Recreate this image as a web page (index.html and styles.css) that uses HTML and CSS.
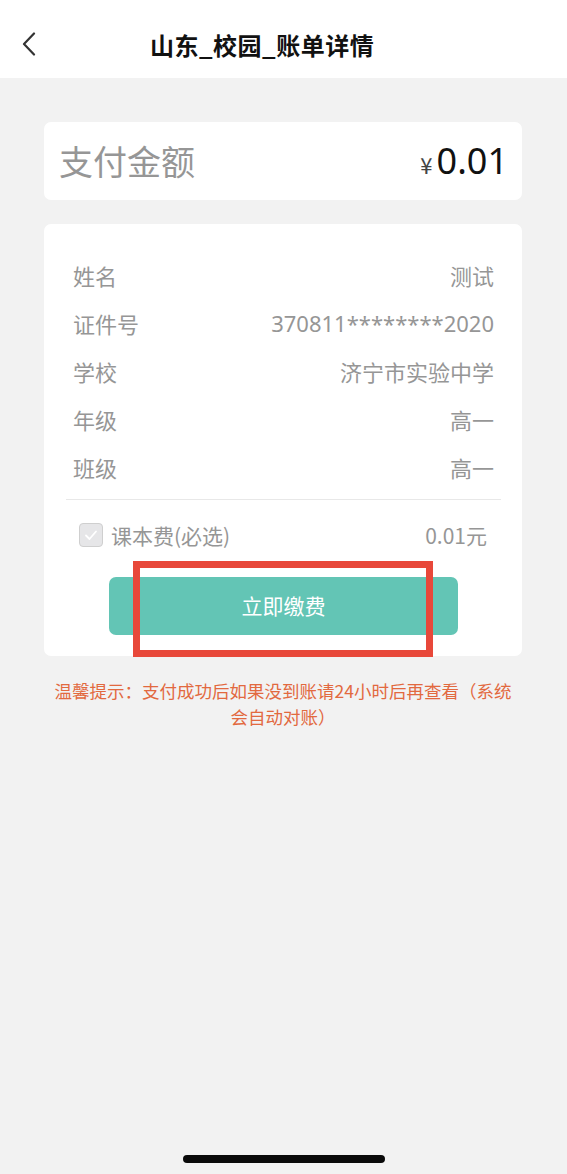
FILE: index.html
```html
<!DOCTYPE html>
<html lang="zh-CN">
<head>
<meta charset="utf-8">
<title>山东_校园_账单详情</title>
<link rel="stylesheet" href="styles.css">
</head>
<body>
<div class="page">
  <header class="nav">
    <span class="back">
      <svg width="14" height="24" viewBox="0 0 14 24"><path d="M12 1.5 L2 12 L12 22.5" fill="none" stroke="#333" stroke-width="2.2" stroke-linecap="round" stroke-linejoin="round"/></svg>
    </span>
    <h1 class="title">山东_校园_账单详情</h1>
  </header>

  <main class="content">
    <section class="card amount-card">
      <span class="amount-label">支付金额</span>
      <span class="amount-value"><span class="yen">¥</span>0.01</span>
    </section>

    <section class="card detail-card">
      <div class="rows">
        <div class="row"><span>姓名</span><span>测试</span></div>
        <div class="row"><span>证件号</span><span>370811********2020</span></div>
        <div class="row"><span>学校</span><span>济宁市实验中学</span></div>
        <div class="row"><span>年级</span><span>高一</span></div>
        <div class="row"><span>班级</span><span>高一</span></div>
      </div>
      <div class="divider"></div>
      <div class="fee-row">
        <span class="fee-left">
          <span class="checkbox">
            <svg width="14" height="12" viewBox="0 0 14 12"><path d="M2 6.5 L5.5 10 L12 2.5" fill="none" stroke="#fff" stroke-width="1.8" stroke-linecap="round" stroke-linejoin="round"/></svg>
          </span>
          <span>课本费(必选)</span>
        </span>
        <span>0.01元</span>
      </div>
      <div class="btn-wrap">
        <button class="pay-btn">立即缴费</button>
        <span class="highlight"></span>
      </div>
    </section>

    <p class="tip">温馨提示：支付成功后如果没到账请24小时后再查看（系统会自动对账）</p>
  </main>

  <div class="home-indicator"></div>
</div>
</body>
</html>
```

FILE: styles.css
```css
* { box-sizing: border-box; }
html, body { margin: 0; padding: 0; }
body {
  background: #f2f2f2;
  font-family: "Noto Sans CJK SC", "Noto Sans", sans-serif;
}
.page {
  min-height: 1174px;
  display: flex;
  flex-direction: column;
}
.nav {
  height: 78px;
  background: #fff;
  display: flex;
  align-items: center;
  padding-left: 22px;
  padding-top: 10px;
}
.back {
  width: 14px;
  height: 24px;
  display: flex;
}
.back svg { display: block; }
.title {
  margin: 0 0 0 114px;
  font-size: 24px;
  font-weight: 700;
  color: #111;
  letter-spacing: 0.5px;
}
.content {
  padding: 0 45px 0 44px;
}
.card {
  background: #fff;
  border-radius: 7px;
}
.amount-card {
  margin-top: 44px;
  height: 78px;
  display: flex;
  align-items: center;
  justify-content: space-between;
  padding: 0 14px 0 15px;
}
.amount-label {
  font-size: 34px;
  color: #969696;
  line-height: 1;
}
.amount-value {
  font-family: "Noto Sans", sans-serif;
  font-size: 36px;
  color: #111;
  line-height: 1;
  display: flex;
  align-items: baseline;
}
.yen {
  font-family: "Noto Sans CJK SC", sans-serif;
  font-size: 22px;
  color: #444;
  margin-right: 4px;
}
.detail-card {
  margin-top: 24px;
  padding: 27px 21px 21px 22px;
}
.rows {
  padding: 0 7px;
}
.row {
  height: 48px;
  display: flex;
  align-items: center;
  justify-content: space-between;
  font-size: 22px;
  color: #969696;
}
.row span:last-child {
  font-family: "Noto Sans", "Noto Sans CJK SC", sans-serif;
}
.divider {
  margin-top: 8px;
  height: 1px;
  background: #e8e8e8;
}
.fee-row {
  height: 70px;
  display: flex;
  align-items: center;
  justify-content: space-between;
  padding: 0 14px 0 13px;
  font-size: 21px;
  color: #969696;
}
.fee-left {
  display: flex;
  align-items: center;
  gap: 8px;
}
.checkbox {
  width: 24px;
  height: 24px;
  border: 1px solid #cfcfcf;
  background: #e6e6e8;
  border-radius: 4px;
  display: flex;
  align-items: center;
  justify-content: center;
}
.btn-wrap {
  position: relative;
  margin-top: 7px;
  display: flex;
  justify-content: center;
}
.pay-btn {
  width: 349px;
  height: 58px;
  border: 0;
  border-radius: 7px;
  background: #63c5b5;
  color: #fff;
  font-family: "Noto Sans CJK SC", sans-serif;
  font-size: 21px;
  padding: 0 0 2px;
}
.highlight {
  position: absolute;
  left: 67px;
  top: -16px;
  width: 300px;
  height: 96px;
  border: 7px solid #e8483a;
}
.tip {
  margin: 22px 0 0;
  padding: 0 6px;
  text-align: center;
  font-size: 17.5px;
  line-height: 26px;
  color: #e2693f;
}
.home-indicator {
  margin: auto auto 11px;
  width: 202px;
  height: 8px;
  border-radius: 4px;
  background: #0a0a0a;
}
```
